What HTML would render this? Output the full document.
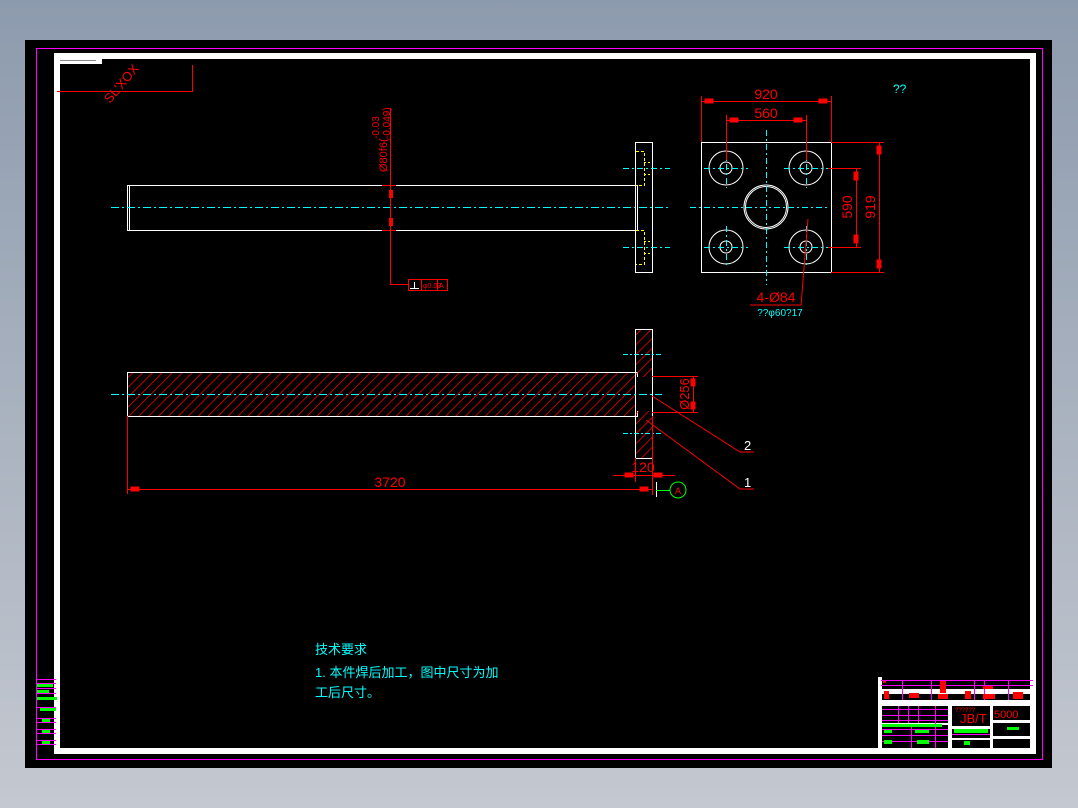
<!DOCTYPE html>
<html><head><meta charset="utf-8"><style>
html,body{margin:0;padding:0;width:1078px;height:808px;overflow:hidden;background:#b4bcc8;}
svg{display:block}
text{font-family:"Liberation Sans","Noto Sans CJK SC",sans-serif;}
</style></head><body>
<svg width="1078" height="808" viewBox="0 0 1078 808" xmlns="http://www.w3.org/2000/svg">
<defs>
<linearGradient id="bg" x1="0" y1="0" x2="0" y2="1"><stop offset="0" stop-color="#8d9bae"/><stop offset="1" stop-color="#c4c8d0"/></linearGradient>
<pattern id="h" width="7" height="7" patternUnits="userSpaceOnUse" patternTransform="rotate(45)"><line x1="0" y1="0" x2="0" y2="7" stroke="#ff0000" stroke-width="1.5"/></pattern>
</defs>
<rect width="1078" height="808" fill="url(#bg)"/>
<rect x="25" y="40" width="1027" height="728" fill="#000"/>
<g shape-rendering="crispEdges">
<rect x="36.5" y="48.5" width="1006" height="711" fill="none" stroke="#ff00ff" stroke-width="1"/>
<rect x="57" y="56" width="976" height="695" fill="none" stroke="#fff" stroke-width="6"/>
<rect x="60" y="59" width="42" height="5" fill="#fff"/>
<line x1="60" y1="60.5" x2="96" y2="60.5" stroke="#888" stroke-width="1"/>
<!-- top-left -->
<polyline points="57,91.5 192.5,91.5 192.5,65" fill="none" stroke="#f00" stroke-width="1"/>
</g>
<text x="0" y="0" fill="#f00" font-size="13" transform="translate(110,104) rotate(-50)">SL'XOX</text>

<g shape-rendering="crispEdges">
<!-- top view shaft -->
<rect x="127.5" y="185.5" width="510" height="45" fill="none" stroke="#fff" stroke-width="1"/>
<line x1="129.5" y1="186" x2="129.5" y2="230" stroke="#fff"/>
<line x1="111" y1="207.5" x2="670" y2="207.5" stroke="#0ff" stroke-dasharray="8,3,2,3"/>
<rect x="635.5" y="142.5" width="17" height="130" fill="none" stroke="#fff" stroke-width="1"/>
<line x1="623" y1="168.5" x2="670" y2="168.5" stroke="#0ff" stroke-dasharray="6,3,2,3"/>
<line x1="623" y1="247.5" x2="670" y2="247.5" stroke="#0ff" stroke-dasharray="6,3,2,3"/>
<polyline points="636,151.5 644.5,151.5 644.5,185.5 636,185.5" fill="none" stroke="#ff0" stroke-dasharray="3,2"/>
<polyline points="636,230.5 644.5,230.5 644.5,264.5 636,264.5" fill="none" stroke="#ff0" stroke-dasharray="3,2"/>
<line x1="644" y1="162.5" x2="651" y2="162.5" stroke="#ff0" stroke-dasharray="2,2"/><line x1="644" y1="174.5" x2="651" y2="174.5" stroke="#ff0" stroke-dasharray="2,2"/>
<line x1="644" y1="241.5" x2="651" y2="241.5" stroke="#ff0" stroke-dasharray="2,2"/><line x1="644" y1="253.5" x2="651" y2="253.5" stroke="#ff0" stroke-dasharray="2,2"/>
<!-- phi80 dim -->
<line x1="390.5" y1="108" x2="390.5" y2="284" stroke="#f00" stroke-width="1"/>
<line x1="382" y1="185.5" x2="396" y2="185.5" stroke="#f00"/><line x1="382" y1="230.5" x2="396" y2="230.5" stroke="#f00"/>
<rect x="389" y="190" width="4" height="8" fill="#f00"/><rect x="389" y="218" width="4" height="8" fill="#f00"/>
<polyline points="390,284.5 408,284.5" stroke="#f00" fill="none"/>
<rect x="408.5" y="279.5" width="39" height="11" fill="none" stroke="#f00"/>
<line x1="421.5" y1="279" x2="421.5" y2="290" stroke="#f00"/><line x1="437.5" y1="279" x2="437.5" y2="290" stroke="#f00"/>
<path d="M410 288.5h9M414.5 282v6" stroke="#fff" fill="none"/>
</g>
<text x="423" y="288" fill="#f00" font-size="7">φ0.03</text><text x="439" y="288" fill="#f00" font-size="7">A</text>
<text fill="#f00" font-size="11" transform="translate(387,172) rotate(-90)">Ø80f6(</text>
<text fill="#f00" font-size="10" transform="translate(379,139) rotate(-90)">-0.03</text>
<text fill="#f00" font-size="10" transform="translate(390,139) rotate(-90)">-0.049)</text>

<!-- plate -->
<g shape-rendering="crispEdges">
<rect x="701.5" y="142.5" width="130" height="130" fill="none" stroke="#fff" stroke-width="1"/>
</g>
<g fill="none" stroke="#fff" stroke-width="1">
<circle cx="726" cy="168" r="17"/><circle cx="726" cy="168" r="6"/>
<circle cx="806" cy="168" r="17"/><circle cx="806" cy="168" r="6"/>
<circle cx="726" cy="247" r="17"/><circle cx="726" cy="247" r="6"/>
<circle cx="806" cy="247" r="17"/><circle cx="806" cy="247" r="6"/>
<circle cx="766" cy="207" r="22"/><circle cx="766" cy="207" r="20.5"/>
</g>
<g stroke="#0ff" stroke-dasharray="6,3,2,3" shape-rendering="crispEdges">
<line x1="690" y1="207.5" x2="830" y2="207.5"/><line x1="766.5" y1="130" x2="766.5" y2="285"/>
<line x1="704" y1="168.5" x2="748" y2="168.5"/><line x1="784" y1="168.5" x2="828" y2="168.5"/>
<line x1="704" y1="247.5" x2="748" y2="247.5"/><line x1="784" y1="247.5" x2="828" y2="247.5"/>
<line x1="726.5" y1="150" x2="726.5" y2="188"/><line x1="806.5" y1="150" x2="806.5" y2="188"/>
<line x1="726.5" y1="226" x2="726.5" y2="268"/><line x1="806.5" y1="226" x2="806.5" y2="268"/>
</g>
<g stroke="#f00" fill="#f00" stroke-width="1" shape-rendering="crispEdges">
<line x1="701.5" y1="96" x2="701.5" y2="142"/><line x1="831.5" y1="96" x2="831.5" y2="142"/>
<line x1="701" y1="101.5" x2="831" y2="101.5"/><rect x="705" y="99" width="8" height="4"/><rect x="819" y="99" width="8" height="4"/>
<line x1="726.5" y1="115" x2="726.5" y2="160"/><line x1="806.5" y1="115" x2="806.5" y2="160"/>
<line x1="726" y1="120.5" x2="806" y2="120.5"/><rect x="730" y="118" width="8" height="4"/><rect x="794" y="118" width="8" height="4"/>
<line x1="831" y1="142.5" x2="884" y2="142.5"/><line x1="831" y1="272.5" x2="884" y2="272.5"/>
<line x1="879.5" y1="142" x2="879.5" y2="272"/><rect x="877" y="146" width="4" height="8"/><rect x="877" y="260" width="4" height="8"/>
<line x1="828" y1="168.5" x2="861" y2="168.5"/><line x1="828" y1="247.5" x2="861" y2="247.5"/>
<line x1="856.5" y1="168" x2="856.5" y2="247"/><rect x="854" y="172" width="4" height="8"/><rect x="854" y="235" width="4" height="8"/>
</g>
<polyline points="808,219 801,305 750,305" fill="none" stroke="#f00"/>
<text x="766" y="99" fill="#f00" font-size="14" text-anchor="middle">920</text>
<text x="766" y="118" fill="#f00" font-size="14" text-anchor="middle">560</text>
<text fill="#f00" font-size="14" text-anchor="middle" transform="translate(852,207) rotate(-90)">590</text>
<text fill="#f00" font-size="14" text-anchor="middle" transform="translate(875,207) rotate(-90)">919</text>
<text x="776" y="302" fill="#f00" font-size="14" text-anchor="middle">4-Ø84</text>
<text x="780" y="316" fill="#0ff" font-size="10" text-anchor="middle">??φ60?17</text>
<text x="893" y="93" fill="#0ff" font-size="12">??</text>

<!-- section view -->
<g shape-rendering="crispEdges">
<rect x="127.5" y="372.5" width="510" height="44" fill="url(#h)" stroke="#fff" stroke-width="1"/>
<rect x="635.5" y="329.5" width="17" height="129" fill="url(#h)" stroke="#fff" stroke-width="1"/>
<rect x="636" y="377" width="16" height="34" fill="#000"/>
<line x1="652.5" y1="377" x2="652.5" y2="411" stroke="#fff"/>
<line x1="111" y1="394.5" x2="662" y2="394.5" stroke="#0ff" stroke-dasharray="8,3,2,3"/>
<line x1="623" y1="354.5" x2="662" y2="354.5" stroke="#0ff" stroke-dasharray="5,2,2,2"/>
<line x1="623" y1="433.5" x2="662" y2="433.5" stroke="#0ff" stroke-dasharray="5,2,2,2"/>
<g stroke="#f00" fill="#f00" stroke-width="1">
<line x1="652" y1="376.5" x2="698" y2="376.5"/><line x1="652" y1="412.5" x2="698" y2="412.5"/>
<line x1="693.5" y1="376" x2="693.5" y2="412"/><rect x="691" y="379" width="4" height="7"/><rect x="691" y="402" width="4" height="7"/>
<line x1="127.5" y1="416" x2="127.5" y2="494"/>
<line x1="127" y1="489.5" x2="652" y2="489.5"/><rect x="131" y="487" width="8" height="4"/><rect x="640" y="487" width="8" height="4"/>
<line x1="635.5" y1="458" x2="635.5" y2="482"/><line x1="652.5" y1="416" x2="652.5" y2="495"/>
<line x1="613" y1="475.5" x2="675" y2="475.5"/><rect x="625" y="473" width="8" height="4"/><rect x="654" y="473" width="8" height="4"/>
</g>
</g>
<polyline points="652,396 740,452 754,452" fill="none" stroke="#f00"/>
<polyline points="646,420 740,489 754,489" fill="none" stroke="#f00"/>
<text x="643" y="472" fill="#f00" font-size="14" text-anchor="middle">120</text>
<text x="390" y="487" fill="#f00" font-size="14" text-anchor="middle">3720</text>
<text fill="#f00" font-size="13" text-anchor="middle" transform="translate(689,394) rotate(-90)">Ø256</text>
<text x="744" y="450" fill="#fff" font-size="13">2</text>
<text x="744" y="487" fill="#fff" font-size="13">1</text>
<line x1="656.5" y1="482" x2="656.5" y2="497" stroke="#fff" shape-rendering="crispEdges"/><line x1="656" y1="490.5" x2="670" y2="490.5" stroke="#0f0" shape-rendering="crispEdges"/>
<circle cx="678" cy="490" r="8" fill="none" stroke="#0f0"/>
<text x="678" y="494" fill="#f00" font-size="9" text-anchor="middle">A</text>

<!-- notes -->
<text x="315" y="654" fill="#0ff" font-size="13">技术要求</text>
<text x="315" y="677" fill="#0ff" font-size="13">1. 本件焊后加工，图中尺寸为加</text>
<text x="315" y="697" fill="#0ff" font-size="13">工后尺寸。</text>

<g shape-rendering="crispEdges">
<!-- left side table -->
<g stroke="#ff00ff" stroke-width="1">
<line x1="36" y1="679.5" x2="56" y2="679.5"/><line x1="36" y1="683.5" x2="56" y2="683.5"/><line x1="36" y1="688.5" x2="56" y2="688.5"/><line x1="36" y1="693.5" x2="56" y2="693.5"/><line x1="36" y1="698.5" x2="56" y2="698.5"/><line x1="36" y1="707.5" x2="56" y2="707.5"/><line x1="36" y1="718.5" x2="56" y2="718.5"/><line x1="36" y1="722.5" x2="56" y2="722.5"/><line x1="36" y1="729.5" x2="56" y2="729.5"/><line x1="36" y1="733.5" x2="56" y2="733.5"/><line x1="36" y1="740.5" x2="56" y2="740.5"/><line x1="36" y1="744.5" x2="56" y2="744.5"/>
</g>
<g fill="#0f0"><rect x="37" y="684" width="16" height="3"/><rect x="37" y="690" width="12" height="3"/><rect x="37" y="697" width="20" height="3"/><rect x="40" y="708" width="16" height="3"/><rect x="42" y="719" width="8" height="3"/><rect x="42" y="730" width="8" height="3"/><rect x="42" y="741" width="8" height="3"/></g>

<!-- title block -->
<rect x="878" y="677" width="4" height="73" fill="#fff"/>
<rect x="882" y="689" width="150" height="5" fill="#fff"/>
<rect x="882" y="700" width="150" height="6" fill="#fff"/>
<rect x="948" y="706" width="4" height="42" fill="#fff"/>
<rect x="990" y="706" width="3" height="42" fill="#fff"/>
<rect x="952" y="726" width="38" height="3" fill="#fff"/><rect x="952" y="738" width="38" height="2" fill="#fff"/>
<rect x="993" y="720" width="37" height="3" fill="#fff"/><rect x="993" y="736" width="37" height="3" fill="#fff"/>
<rect x="882" y="723" width="66" height="2" fill="#fff"/>
<g stroke="#ff00ff" stroke-width="1">
<line x1="881" y1="680.5" x2="1033" y2="680.5"/><line x1="881" y1="685.5" x2="1033" y2="685.5"/>
<line x1="902.5" y1="680" x2="902.5" y2="700"/><line x1="931.5" y1="680" x2="931.5" y2="700"/><line x1="974.5" y1="680" x2="974.5" y2="700"/><line x1="984.5" y1="680" x2="984.5" y2="700"/><line x1="1008.5" y1="680" x2="1008.5" y2="700"/>
<line x1="882" y1="709.5" x2="948" y2="709.5"/><line x1="882" y1="715.5" x2="948" y2="715.5"/><line x1="882" y1="720.5" x2="948" y2="720.5"/><line x1="882" y1="729.5" x2="948" y2="729.5"/><line x1="882" y1="735.5" x2="948" y2="735.5"/><line x1="882" y1="741.5" x2="948" y2="741.5"/>
<line x1="898.5" y1="706" x2="898.5" y2="723"/><line x1="908.5" y1="706" x2="908.5" y2="723"/><line x1="918.5" y1="706" x2="918.5" y2="723"/><line x1="935.5" y1="706" x2="935.5" y2="748"/><line x1="911.5" y1="725" x2="911.5" y2="748"/>
<line x1="952" y1="734.5" x2="990" y2="734.5"/>
</g>
<g fill="#f00"><rect x="883" y="681" width="3" height="2"/><rect x="884" y="691" width="5" height="8"/><rect x="909" y="693" width="10" height="5"/><rect x="940" y="681" width="6" height="12"/><rect x="938" y="694" width="10" height="5"/><rect x="965" y="691" width="6" height="8"/><rect x="983" y="686" width="10" height="3"/><rect x="983" y="694" width="12" height="5"/><rect x="1013" y="692" width="10" height="7"/></g>
<g fill="#0f0"><rect x="882" y="724" width="60" height="3"/><rect x="884" y="730" width="8" height="3"/><rect x="915" y="730" width="14" height="3"/><rect x="884" y="740" width="8" height="4"/><rect x="917" y="740" width="12" height="4"/><rect x="954" y="729" width="34" height="4"/><rect x="1007" y="727" width="12" height="3"/><rect x="964" y="741" width="6" height="4"/></g>
</g>
<text x="955" y="712" fill="#f00" font-size="6">??????</text>
<text x="960" y="723" fill="#f00" font-size="13">JB/T</text>
<text x="994" y="718" fill="#f00" font-size="11">5000</text>
</svg>
</body></html>
